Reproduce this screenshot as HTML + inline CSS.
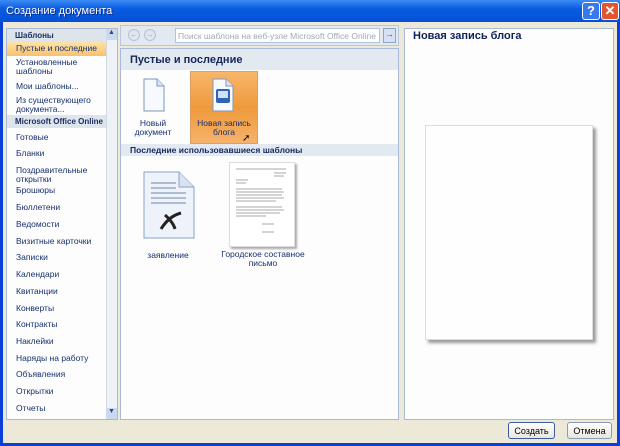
<!DOCTYPE html><html><head><meta charset="utf-8"><style>
*{margin:0;padding:0;box-sizing:border-box}
body{width:620px;height:446px;overflow:hidden;font-family:"Liberation Sans",sans-serif;font-size:9px;position:relative;background:#0a3fd8}
.a{position:absolute}
#win{left:3px;top:22px;width:614px;height:421px;background:#ece9d8}
#title{left:0;top:0;width:620px;height:22px;background:linear-gradient(#3d8bf5,#0a5ce0 40%,#0550d8);color:#fff;font-size:11px;padding:5px 0 0 6px;text-shadow:1px 1px #0b2a8a}
.pan{background:#fcfdfc;border:1px solid #a8bad6}
.it{position:absolute;left:10px;color:#17306f;line-height:9px;font-size:8.5px;white-space:nowrap}
.hd{position:absolute;left:1px;width:99px;height:13px;background:#dde4ec;font-weight:bold;color:#1b2d5a;padding:2px 0 0 8px;font-size:8px;white-space:nowrap;overflow:hidden}
.btn{border:1px solid #3c5aa0;border-radius:3px;background:linear-gradient(#fff,#e9e6dc);font-size:9px;text-align:center;padding-top:3px;color:#000}
</style></head><body>
<div class="a" id="title">Создание документа</div>
<div class="a" style="left:582px;top:2px;width:18px;height:18px;background:#3a78ef;border:1px solid #fff;border-radius:3px;color:#fff;font-weight:bold;font-size:13px;text-align:center;line-height:16px">?</div>
<div class="a" style="left:601px;top:2px;width:18px;height:18px;background:#e2562f;border:1px solid #fff;border-radius:3px;color:#fff;font-weight:bold;font-size:13px;text-align:center;line-height:16px">✕</div>
<div class="a" id="win"></div>
<div class="a pan" style="left:6px;top:28px;width:112px;height:392px"></div>
<div class="a" style="left:106px;top:29px;width:11px;height:390px;background:#eef1f6;border-left:1px solid #d0d8e4"></div>
<div class="a" style="left:106px;top:29px;width:11px;height:11px;background:#cbd9ee;font-size:7px;text-align:center;color:#2a4a8a">▲</div>
<div class="a" style="left:106px;top:408px;width:11px;height:11px;background:#cbd9ee;font-size:7px;text-align:center;color:#2a4a8a">▼</div>
<div class="a" style="left:6px;top:28px;width:100px;height:392px">
<div class="hd" style="top:1px">Шаблоны</div>
<div class="a" style="left:1px;top:14px;width:99px;height:14px;background:linear-gradient(#fde3a8,#f9c06a)"></div>
<div class="it" style="top:16px">Пустые и последние</div>
<div class="it" style="top:30px">Установленные<br>шаблоны</div>
<div class="it" style="top:54px">Мои шаблоны...</div>
<div class="it" style="top:68px">Из существующего<br>документа...</div>
<div class="hd" style="top:87px">Microsoft Office Online</div>
<div class="it" style="top:105px">Готовые</div>
<div class="it" style="top:121px">Бланки</div>
<div class="it" style="top:138px">Поздравительные<br>открытки</div>
<div class="it" style="top:158px">Брошюры</div>
<div class="it" style="top:175px">Бюллетени</div>
<div class="it" style="top:192px">Ведомости</div>
<div class="it" style="top:209px">Визитные карточки</div>
<div class="it" style="top:225px">Записки</div>
<div class="it" style="top:242px">Календари</div>
<div class="it" style="top:259px">Квитанции</div>
<div class="it" style="top:276px">Конверты</div>
<div class="it" style="top:292px">Контракты</div>
<div class="it" style="top:309px">Наклейки</div>
<div class="it" style="top:326px">Наряды на работу</div>
<div class="it" style="top:342px">Объявления</div>
<div class="it" style="top:359px">Открытки</div>
<div class="it" style="top:376px">Отчеты</div>
</div>
<div class="a" style="left:120px;top:25px;width:279px;height:21px;background:#e3e9f1;border:1px solid #b9c7da"></div>
<div class="a" style="left:128px;top:29px;width:12px;height:12px;border-radius:6px;background:#dfe6ef;border:1px solid #b4c2d6;color:#9aaccb;font-size:8px;text-align:center;line-height:10px">←</div>
<div class="a" style="left:144px;top:29px;width:12px;height:12px;border-radius:6px;background:#dfe6ef;border:1px solid #b4c2d6;color:#9aaccb;font-size:8px;text-align:center;line-height:10px">→</div>
<div class="a" style="left:175px;top:28px;width:205px;height:15px;background:#fff;border:1px solid #b4c2d6;color:#a0a8b4;font-size:8.5px;padding:2px 0 0 2px;white-space:nowrap;overflow:hidden">Поиск шаблона на веб-узле Microsoft Office Online</div>
<div class="a" style="left:383px;top:28px;width:13px;height:15px;background:#d6e2f2;border:1px solid #8fa6c8;color:#2a5aa8;font-size:9px;text-align:center;font-weight:bold">→</div>
<div class="a pan" style="left:120px;top:48px;width:279px;height:372px"></div>
<div class="a" style="left:121px;top:49px;width:277px;height:21px;background:#e3e9f1;color:#16285a;font-weight:bold;font-size:11px;padding:5px 0 0 9px">Пустые и последние</div>
<div class="a" style="left:190px;top:71px;width:68px;height:73px;background:linear-gradient(#f7b66a,#ef9a3c 50%,#f6b26a);border:1px solid #d9a060"></div>
<svg class="a" style="left:143px;top:78px" width="22" height="34"><path d="M1 1h13l7 7v25H1z" fill="#f6f9fd" stroke="#7e98c0"/><path d="M14 1v7h7" fill="#dde6f2" stroke="#7e98c0"/></svg>
<svg class="a" style="left:212px;top:78px" width="22" height="34"><path d="M1 1h13l7 7v25H1z" fill="#f6f9fd" stroke="#7e98c0"/><path d="M14 1v7h7" fill="#dde6f2" stroke="#7e98c0"/><rect x="4" y="11" width="14" height="14" rx="2" fill="#2f63b8"/><rect x="6" y="13" width="10" height="7" fill="#cfe0f7"/></svg>
<div class="a" style="left:128px;top:119px;width:50px;text-align:center;color:#17306f;font-size:8.5px;line-height:9px">Новый<br>документ</div>
<div class="a" style="left:190px;top:119px;width:68px;text-align:center;color:#17306f;font-size:8.5px;line-height:9px">Новая запись<br>блога</div>
<div class="a" style="left:242px;top:133px;font-size:10px;color:#000">➚</div>
<div class="a" style="left:121px;top:144px;width:277px;height:12px;background:#e3e9f1;color:#16285a;font-weight:bold;font-size:8.5px;padding:1px 0 0 9px">Последние использовавшиеся шаблоны</div>
<svg class="a" style="left:143px;top:171px" width="52" height="68"><path d="M1 1h35l15 15v51H1z" fill="#eef3fb" stroke="#8aa3c8"/><path d="M36 1v15h15" fill="#d8e2f0" stroke="#8aa3c8"/><g stroke="#6f86ad"><path d="M8 12h25M8 17h25M8 22h35M8 27h35M8 32h35"/></g><path d="M18 58c5-8 12-14 20-16M22 44c5 4 9 10 10 14" stroke="#222" stroke-width="3" fill="none"/></svg>
<div class="a" style="left:229px;top:162px;width:66px;height:85px;background:#fff;border:1px solid #ddd;box-shadow:2px 2px 2px #aaa"></div>
<svg class="a" style="left:234px;top:167px" width="58" height="70"><g stroke="#aaa" stroke-width="1"><path d="M2 2h50M40 6h12M40 9h10M2 13h12M2 16h10M2 22h46M2 25h48M2 28h46M2 31h48M2 34h40M2 40h46M2 43h48M2 46h44M2 49h30M28 57h12M28 65h12"/></g></svg>
<div class="a" style="left:130px;top:250px;width:76px;text-align:center;color:#17306f;font-size:8.5px">заявление</div>
<div class="a" style="left:218px;top:250px;width:90px;text-align:center;color:#17306f;font-size:8.5px;line-height:9px">Городское составное<br>письмо</div>
<div class="a pan" style="left:404px;top:28px;width:210px;height:392px"></div>
<div class="a" style="left:413px;top:30px;color:#10235a;font-weight:bold;font-size:11px">Новая запись блога</div>
<div class="a" style="left:425px;top:125px;width:168px;height:215px;background:#fdfefd;border:1px solid #ddd;box-shadow:3px 3px 3px #999"></div>
<div class="a btn" style="left:508px;top:422px;width:47px;height:17px">Создать</div>
<div class="a btn" style="left:567px;top:422px;width:45px;height:17px;border-color:#8a99b8">Отмена</div>
</body></html>
